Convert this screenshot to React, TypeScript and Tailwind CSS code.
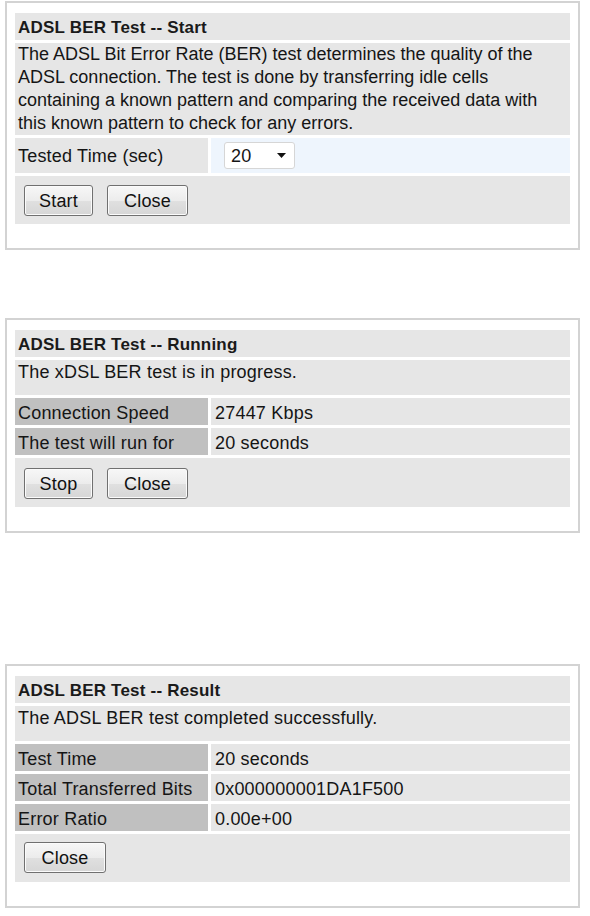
import React from "react";

const font = { fontFamily: '"Liberation Sans", Arial, sans-serif' };

function Btn({ label, w }: { label: string; w: string }) {
  return (
    <div
      className={`${w} h-[31px] flex items-center justify-center rounded-[3px] border border-[#707070] bg-[linear-gradient(#f7f7f7,#ececec_50%,#e0e0e0_51%,#d6d6d6)] shadow-[inset_0_0_0_1px_#fbfbfb] text-[18px] leading-[22px] tracking-[0.2px] text-[#111]`}
    >
      {label}
    </div>
  );
}

function Header({ title }: { title: string }) {
  return (
    <div className="h-[27px] bg-[#e6e6e6] pl-[3px] pt-[4px] text-[17px] leading-[22px] font-bold text-[#1a1a1a]">
      {title}
    </div>
  );
}

function DataRow({ label, value }: { label: string; value: string }) {
  return (
    <div className="flex gap-[3px] h-[27px]">
      <div className="w-[193px] shrink-0 bg-[#c0c0c0] pl-[3px] pt-[4px] leading-[22px] whitespace-nowrap">
        {label}
      </div>
      <div className="flex-1 bg-[#e6e6e6] pl-[4px] pt-[4px] leading-[22px] whitespace-nowrap">
        {value}
      </div>
    </div>
  );
}

function Panel({ children }: { children: React.ReactNode }) {
  return (
    <div className="ml-[5px] w-[575px] border-2 border-[#d3d3d3] bg-white pt-[10px] px-[8px] pb-[24px]">
      <div className="flex flex-col gap-[3px] text-[18px] tracking-[0.2px] text-[#151515]">
        {children}
      </div>
    </div>
  );
}

export default function App() {
  return (
    <div className="w-[590px] h-[916px] bg-white pt-[1px]" style={font}>
      <Panel>
        <Header title="ADSL BER Test -- Start" />
        <div className="bg-[#e6e6e6] pl-[3px] leading-[23px] whitespace-nowrap tracking-normal">
          The ADSL Bit Error Rate (BER) test determines the quality of the
          <br />
          ADSL connection. The test is done by transferring idle cells
          <br />
          containing a known pattern and comparing the received data with
          <br />
          this known pattern to check for any errors.
        </div>
        <div className="flex gap-[3px] h-[35px]">
          <div className="w-[193px] shrink-0 bg-[#e6e6e6] pl-[3px] flex items-center leading-[22px] whitespace-nowrap">
            Tested Time (sec)
          </div>
          <div className="flex-1 bg-[#eef5fd] pl-[13px] flex items-center">
            <div className="w-[71px] h-[27px] bg-white border border-[#d6d6d6] rounded-[3px] flex items-center justify-between pl-[6px] pr-[9px] leading-[22px]">
              <span>20</span>
              <svg width="9" height="5" viewBox="0 0 9 5" className="mr-[-1px]">
                <path d="M0 0 L9 0 L4.5 5 Z" fill="#111" />
              </svg>
            </div>
          </div>
        </div>
        <div className="h-[48px] bg-[#e6e6e6] pl-[9px] pt-[9px] flex gap-[14px] items-start">
          <Btn label="Start" w="w-[69px]" />
          <Btn label="Close" w="w-[81px]" />
        </div>
      </Panel>

      <div className="h-[68px]" />

      <Panel>
        <Header title="ADSL BER Test -- Running" />
        <div className="h-[35px] bg-[#e6e6e6] pl-[3px] pt-[1px] leading-[23px] whitespace-nowrap">
          The xDSL BER test is in progress.
        </div>
        <DataRow label="Connection Speed" value="27447 Kbps" />
        <DataRow label="The test will run for" value="20 seconds" />
        <div className="h-[49px] bg-[#e6e6e6] pl-[9px] pt-[10px] flex gap-[14px] items-start">
          <Btn label="Stop" w="w-[69px]" />
          <Btn label="Close" w="w-[81px]" />
        </div>
      </Panel>

      <div className="h-[131px]" />

      <Panel>
        <Header title="ADSL BER Test -- Result" />
        <div className="h-[35px] bg-[#e6e6e6] pl-[3px] pt-[1px] leading-[23px] whitespace-nowrap">
          The ADSL BER test completed successfully.
        </div>
        <DataRow label="Test Time" value="20 seconds" />
        <DataRow label="Total Transferred Bits" value="0x000000001DA1F500" />
        <DataRow label="Error Ratio" value="0.00e+00" />
        <div className="h-[48px] bg-[#e6e6e6] pl-[9px] pt-[8px] flex gap-[14px] items-start">
          <Btn label="Close" w="w-[82px]" />
        </div>
      </Panel>
    </div>
  );
}
